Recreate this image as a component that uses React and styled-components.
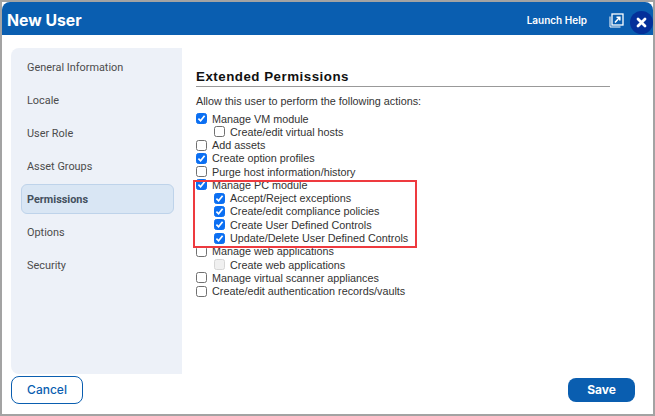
import styled, {createGlobalStyle} from "styled-components"

const GlobalStyle = createGlobalStyle`
  html, body {
    margin: 0;
    padding: 0;
    background: #a3a3a3;
  }
`

const Dialog = styled.div`
  box-sizing: border-box;
  width: 655px;
  height: 416px;
  border: 2px solid #a3a3a3;
  background: #fff;
  display: flex;
  flex-direction: column;
  font-family: "Liberation Sans", Arial, sans-serif;
  overflow: hidden;
  position: relative;
`

const Header = styled.header`
  box-sizing: border-box;
  height: 33px;
  flex: none;
  background: #0a5eb0;
  border-radius: 8px 8px 0 0;
  display: flex;
  align-items: center;
  padding: 3px 0 0 5px;
  color: #fff;
`

const Title = styled.h1`
  margin: 0;
  flex: 1;
  font-family: Inter, "Liberation Sans", sans-serif;
  font-size: 15.8px;
  font-weight: 700;
`

const HelpLink = styled.span`
  font-family: Inter, "Liberation Sans", sans-serif;
  font-size: 10px;
  font-weight: 600;
  margin-right: 22px;
`

const CloseButton = styled.span`
  width: 23px;
  height: 23px;
  border-radius: 50%;
  background: #04309a;
  margin: 4px 0 0 6px;
  display: flex;
  align-items: center;
  justify-content: center;
`

const Body = styled.div`
  flex: 1;
  min-height: 0;
  display: flex;
  padding: 13px 0 0 9px;
`

const Sidebar = styled.nav`
  width: 171px;
  height: 326px;
  flex: none;
  box-sizing: border-box;
  background: #edf1f8;
  border-radius: 8px 0 0 8px;
  padding: 4px 8px 0 10px;
  display: flex;
  flex-direction: column;
  gap: 3px;
`

const NavItem = styled.div`
  box-sizing: border-box;
  height: 30px;
  display: flex;
  align-items: center;
  padding-left: 5px;
  font-family: Roboto, "Liberation Sans", sans-serif;
  font-size: 10.9px;
  font-weight: ${(p) => (p.$active ? 700 : 400)};
  color: ${(p) => (p.$active ? "#44505e" : "#4c4c4c")};
  background: ${(p) => (p.$active ? "#d9e6f4" : "transparent")};
  border: 1px solid ${(p) => (p.$active ? "#bed3ea" : "transparent")};
  border-radius: 6px;
`

const Content = styled.main`
  flex: 1;
  padding: 21px 0 0 14px;
  position: relative;
`

const Heading = styled.h2`
  margin: 0;
  width: 414px;
  font-size: 13.33px;
  line-height: 16px;
  letter-spacing: 0.5px;
  font-weight: 700;
  color: #111;
  border-bottom: 1px solid #999;
  padding-bottom: 1px;
`

const Intro = styled.p`
  margin: 8px 0 4px;
  font-size: 10.8px;
  line-height: 13px;
  color: #333;
`

const Row = styled.label`
  height: 13.27px;
  display: flex;
  align-items: center;
  gap: 5px;
  padding-left: ${(p) => (p.$sub ? "18px" : "0")};
  font-size: 10.8px;
  color: #333;
`

const Box = styled.span`
  box-sizing: border-box;
  width: 11px;
  height: 11px;
  flex: none;
  border-radius: 2.5px;
  border: 1px solid ${(p) => (p.$checked ? "#0b6ff2" : p.$disabled ? "#d6d6d6" : "#707070")};
  background: ${(p) => (p.$checked ? "#0b6ff2" : p.$disabled ? "#f0f0f0" : "#fff")};
  display: flex;
  align-items: center;
  justify-content: center;
`

const Highlight = styled.div`
  position: absolute;
  left: 11px;
  top: 132px;
  width: 224px;
  height: 68px;
  box-sizing: border-box;
  border: 2px solid #ee3a3f;
  pointer-events: none;
`

const Footer = styled.footer`
  flex: none;
  height: 39px;
  display: flex;
  align-items: center;
  justify-content: space-between;
  padding: 0 18px 5px 9px;
`

const CancelButton = styled.button`
  width: 72px;
  height: 28px;
  background: #fff;
  border: 1px solid #0a5eb0;
  border-radius: 8px;
  color: #0a5eb0;
  font-family: Inter, "Liberation Sans", sans-serif;
  font-size: 12px;
  font-weight: 500;
  padding: 0;
`

const SaveButton = styled.button`
  width: 67px;
  height: 24px;
  background: #0a5eb0;
  border: none;
  border-radius: 8px;
  color: #fff;
  font-family: Inter, "Liberation Sans", sans-serif;
  font-size: 12px;
  font-weight: 700;
  padding: 0;
`

const navItems = [
  "General Information",
  "Locale",
  "User Role",
  "Asset Groups",
  "Permissions",
  "Options",
  "Security",
]

const permissions = [
  {label: "Manage VM module", checked: true},
  {label: "Create/edit virtual hosts", sub: true},
  {label: "Add assets"},
  {label: "Create option profiles", checked: true},
  {label: "Purge host information/history"},
  {label: "Manage PC module", checked: true},
  {label: "Accept/Reject exceptions", sub: true, checked: true},
  {label: "Create/edit compliance policies", sub: true, checked: true},
  {label: "Create User Defined Controls", sub: true, checked: true},
  {label: "Update/Delete User Defined Controls", sub: true, checked: true},
  {label: "Manage web applications"},
  {label: "Create web applications", sub: true, disabled: true},
  {label: "Manage virtual scanner appliances"},
  {label: "Create/edit authentication records/vaults"},
]

const CheckBox = ({checked, disabled}) => (
  <Box $checked={checked} $disabled={disabled}>
    {checked && (
      <svg width="9" height="9" viewBox="0 0 9 9" fill="none">
        <path d="M1.4 4.6 3.6 6.8 7.6 1.8" stroke="#fff" strokeWidth="1.7" />
      </svg>
    )}
  </Box>
)

// Two overlapping squares with an outward arrow
const PopoutIcon = () => (
  <svg width="15" height="15" viewBox="0 0 15 15" fill="none" stroke="#fff">
    <path d="M1 3.5V14H11.5" strokeWidth="1" />
    <rect x="3" y="1" width="11" height="11" strokeWidth="1.3" />
    <path d="M6 9.5 10.5 4.5M7.5 4.2H10.8V7.5" strokeWidth="1.6" />
  </svg>
)

const CloseIcon = () => (
  <svg width="11" height="11" viewBox="0 0 11 11" fill="none">
    <path d="M2 2 9 9M9 2 2 9" stroke="#fff" strokeWidth="2.8" strokeLinecap="round" />
  </svg>
)

const App = () => {
  return (
    <>
      <GlobalStyle />
      <Dialog>
        <Header>
          <Title>New User</Title>
          <HelpLink>Launch Help</HelpLink>
          <PopoutIcon />
          <CloseButton>
            <CloseIcon />
          </CloseButton>
        </Header>
        <Body>
          <Sidebar>
            {navItems.map((item) => (
              <NavItem key={item} $active={item === "Permissions"}>
                {item}
              </NavItem>
            ))}
          </Sidebar>
          <Content>
            <Heading>Extended Permissions</Heading>
            <Intro>Allow this user to perform the following actions:</Intro>
            {permissions.map((p) => (
              <Row key={p.label} $sub={p.sub}>
                <CheckBox checked={p.checked} disabled={p.disabled} />
                {p.label}
              </Row>
            ))}
            <Highlight />
          </Content>
        </Body>
        <Footer>
          <CancelButton>Cancel</CancelButton>
          <SaveButton>Save</SaveButton>
        </Footer>
      </Dialog>
    </>
  )
}

export default App
